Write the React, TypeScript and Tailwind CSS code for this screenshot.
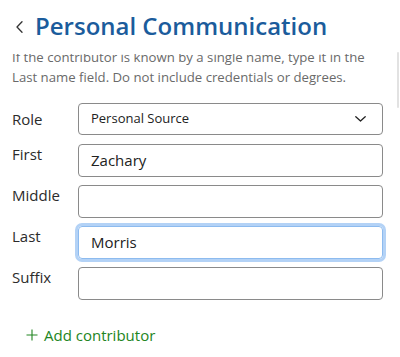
import React from "react";

function Row({ label, value, focused }: { label: string; value?: string; focused?: boolean }) {
  return (
    <div className="flex items-start">
      <div className="w-[66px] text-[15px] leading-[20px] text-[#2b2b2b]">{label}</div>
      <div
        className={
          "flex-1 h-[33px] rounded-[4px] flex items-center px-[12px] text-[15px] text-[#222] " +
          (focused
            ? "border border-[#8dbbef] ring-[3px] ring-[#b3d2f6]"
            : "border border-[#8a8a8a]")
        }
      >
        {value}
      </div>
    </div>
  );
}

export default function App() {
  return (
    <div
      className="relative w-[400px] h-[357px] bg-white overflow-hidden"
      style={{ fontFamily: '"Open Sans", "Noto Sans", sans-serif' }}
    >
      <header className="flex items-start h-[54px]">
        <svg className="mt-[21px] ml-[16px]" width="7" height="12" viewBox="0 0 7 12" fill="none">
          <path d="M6 0.8L1 6L6 11.2" stroke="#333" strokeWidth="1.3" strokeLinecap="round" strokeLinejoin="round" />
        </svg>
        <h1 className="ml-[12px] mt-[10px] text-[24px] leading-[32px] font-semibold text-[#1b5c9c]">
          Personal Communication
        </h1>
      </header>
      <div className="h-[303px] overflow-hidden">
        <p className="mt-[-7px] pl-[12px] pr-[20px] text-[13.2px] leading-[20px] text-[#6a6a6a]">
          If the contributor is known by a single name, type it in the Last name field. Do not include credentials or degrees.
        </p>
        <div className="mt-[16px] pl-[12px] pr-[17px] flex flex-col gap-[8px]">
          <div className="flex items-center mb-[1px]">
            <div className="w-[66px] text-[15px] leading-[20px] text-[#2b2b2b]">Role</div>
            <div className="flex-1 h-[32px] rounded-[4px] border border-[#8a8a8a] flex items-center justify-between pl-[12px] pr-[16px] text-[13px] text-[#222]">
              <span>Personal Source</span>
              <svg width="11" height="6" viewBox="0 0 11 6" fill="none">
                <path d="M0.8 0.8L5.5 5L10.2 0.8" stroke="#222" strokeWidth="1.3" strokeLinecap="round" strokeLinejoin="round" />
              </svg>
            </div>
          </div>
          <Row label="First" value="Zachary" />
          <Row label="Middle" />
          <Row label="Last" value="Morris" focused />
          <Row label="Suffix" />
        </div>
        <div className="mt-[25px] pl-[26px] flex items-center gap-[6px] text-[15px] leading-[20px] text-[#228522]">
          <svg width="12" height="12" viewBox="0 0 12 12" fill="none">
            <path d="M6 0.5V11.5M0.5 6H11.5" stroke="#228522" strokeWidth="1.1" />
          </svg>
          <span>Add contributor</span>
        </div>
      </div>
      <div className="absolute right-[1px] top-[52px] w-[2px] h-[56px] bg-[#e2e2e2] rounded-full" />
    </div>
  );
}
